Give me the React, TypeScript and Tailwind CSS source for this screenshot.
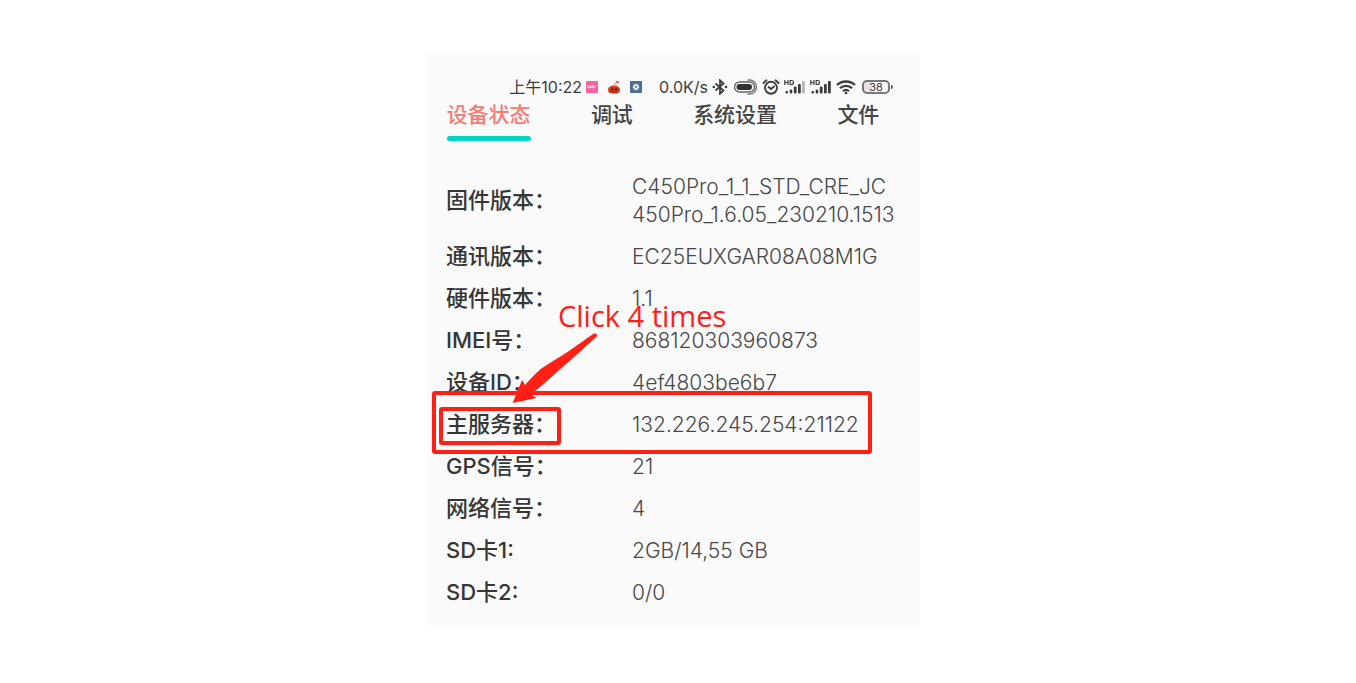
import type { ReactNode } from "react";

const tabs = ["设备状态", "调试", "系统设置", "文件"];

type Row = { label: string; value: ReactNode; marked?: boolean };

const rows: Row[] = [
  {
    label: "固件版本：",
    value: (
      <>
        C450Pro_1_1_STD_CRE_JC
        <br />
        450Pro_1.6.05_230210.1513
      </>
    ),
  },
  { label: "通讯版本：", value: "EC25EUXGAR08A08M1G" },
  { label: "硬件版本：", value: "1.1" },
  { label: "IMEI号：", value: "868120303960873" },
  { label: "设备ID：", value: "4ef4803be6b7" },
  { label: "主服务器：", value: "132.226.245.254:21122", marked: true },
  { label: "GPS信号：", value: "21" },
  { label: "网络信号：", value: "4" },
  { label: "SD卡1:", value: "2GB/14,55 GB" },
  { label: "SD卡2:", value: "0/0" },
];

function AppIcons() {
  return (
    <svg width="57" height="16" viewBox="0 0 57 16" aria-hidden="true">
      <rect x="0" y="2" width="12" height="12" rx="1" fill="#f9629f" />
      <path d="M1.500 6.500l.5 2.500 1.500-1 .8-1.500.7 2.500 1.500-1 .5-1.500.8 2.500 1.500-1 1-1.500" fill="none" stroke="#fff" strokeWidth="1" />
      <path d="M22 11c0-3 2.500-4.500 6-4.500s6 1.500 6 4.500-2.500 3.500-6 3.500-6-.5-6-3.500z" fill="#d43d1c" />
      <path d="M28 7c0-2 1-3 3-3" fill="none" stroke="#e8b0a0" strokeWidth="1.500" />
      <circle cx="31.500" cy="3" r="1.300" fill="#e2583a" />
      <path d="M25 11l1.500-2 1 2zM29 11l1-2 1.500 2zM25 12.800h6" fill="#5b1408" stroke="#5b1408" strokeWidth=".5" />
      <rect x="44" y="2" width="12" height="12" rx="1" fill="#4c6f92" />
      <circle cx="50" cy="8" r="1.900" fill="none" stroke="#fff" strokeWidth="1.600" />
      <path d="M50 4.600v1M50 10.400v1M46.600 8h1M52.400 8h1M47.600 5.600l.7.7M51.700 9.700l.7.7M52.400 5.600l-.7.7M48.300 9.700l-.7.7" stroke="#fff" strokeWidth="1" />
    </svg>
  );
}

function Signal({ last }: { last: string }) {
  return (
    <svg width="22" height="16" viewBox="0 0 22 16" fill="#3c3c3c" aria-hidden="true">
      <path d="M.8 1v5M4 1v5M.8 3.500H4M6.200 1.500v4h1.500c2.300 0 2.300-4 0-4z" fill="none" stroke="#3c3c3c" strokeWidth="1.200" />
      <rect x="1.500" y="12" width="2.500" height="2.500" rx="1" />
      <rect x="5.700" y="10.500" width="2.500" height="4" rx="1" />
      <rect x="9.800" y="7.500" width="2.800" height="7" rx="1" />
      <rect x="14" y="5" width="2.800" height="9.500" rx="1" />
      <rect x="18" y="2" width="2.800" height="12.500" rx="1" fill={last} />
    </svg>
  );
}

function StatusIcons() {
  return (
    <div className="flex items-center">
      <svg className="mr-1.5" width="16" height="16" viewBox="0 0 16 16" fill="none" stroke="#3c3c3c" strokeWidth="1.800" aria-hidden="true">
        <path d="M3.500 4.500l8 7L8 14.700V1.300l3.500 3.200-8 7" />
        <circle cx="1.800" cy="8" r="1.300" fill="#3c3c3c" stroke="none" />
        <circle cx="14" cy="8" r="1.300" fill="#3c3c3c" stroke="none" />
      </svg>
      <svg className="mr-1" width="24" height="16" viewBox="0 0 24 16" fill="none" aria-hidden="true">
        <path d="M13.500 1h2a7 7 0 010 14h-2" stroke="#777" strokeWidth="1.400" />
        <path d="M5 3h10.500a5 5 0 010 10H5.500a5 5 0 010-10z" stroke="#666" strokeWidth="1.400" />
        <rect x="2.500" y="5" width="15.500" height="6" rx="3" fill="#333" />
      </svg>
      <svg className="mr-1" width="18" height="16" viewBox="0 0 18 16" fill="none" stroke="#3c3c3c" strokeWidth="1.900" aria-hidden="true">
        <circle cx="9" cy="8.800" r="6" />
        <path d="M6.500 8l2.500 2 3-2.500M1.500 4l3-2.700M16.500 4l-3-2.700" strokeLinecap="round" />
      </svg>
      <Signal last="#b5b5b5" />
      <span className="w-1" />
      <Signal last="#3c3c3c" />
      <svg className="ml-1 mr-1.5" width="20" height="16" viewBox="0 0 20 16" fill="none" stroke="#3c3c3c" strokeWidth="2.300" aria-hidden="true">
        <path d="M1 6c5-4.700 13-4.700 18 0M4 9.200c3.400-3.200 8.600-3.200 12 0M7 12.200c1.700-1.500 4.300-1.500 6 0" />
        <circle cx="10" cy="14" r="1.300" fill="#3c3c3c" stroke="none" />
      </svg>
      <div className="flex items-center">
        <span className="flex h-[14px] w-7 items-center justify-center rounded-[5px] border-2 border-[#777] bg-linear-to-r from-[#e4e4e4] from-35% to-[#fafafa] to-35% text-[11px] leading-none">
          38
        </span>
        <span className="ml-px h-1 w-[2px] rounded-r bg-[#555]" />
      </div>
    </div>
  );
}

export default function App() {
  return (
    <main className="flex min-h-screen justify-center bg-white pt-[53px] pr-[9px] pb-[57px] font-[Inter,'Noto_Sans_CJK_SC',sans-serif]">
      <section className="relative w-full max-w-[493px] self-start bg-[#fafafa] pb-[19px]">
        <div className="flex h-[47px] items-end justify-end pr-[27px] pb-px text-[#3c3c3c]">
          <div className="flex h-6 items-center text-base">
            <span className="mr-1">上午10:22</span>
            <AppIcons />
            <span className="mr-1 ml-4">0.0K/s</span>
            <StatusIcons />
          </div>
        </div>

        <nav className="grid grid-cols-4 text-[21px] leading-[30px] font-medium text-[#444]">
          {tabs.map((tab, i) => (
            <button key={tab} type="button" className="flex flex-col items-center">
              <span className={i === 0 ? "text-[#f47c74]" : ""}>{tab}</span>
              {i === 0 && <span className="mt-1.5 h-[5px] w-[84px] rounded-full bg-[#05d5c3]" />}
            </button>
          ))}
        </nav>

        <dl className="mt-8 flex flex-col gap-3.5 pl-[19px] text-[22px] leading-7">
          {rows.map((row) => (
            <div key={row.label} className="relative flex items-center">
              <dt className="w-[186px] shrink-0 pb-0.5 leading-[26px] font-medium whitespace-nowrap text-[#363636]">{row.label}</dt>
              <dd className="text-[21px] font-light whitespace-nowrap text-[#484848]">{row.value}</dd>
              {row.marked && (
                <>
                  <span className="absolute -top-5 -left-[14px] h-[63px] w-[440px] rounded-[3px] border-4 border-[#ff2015]" />
                  <span className="absolute -top-1 -left-[7px] h-[38px] w-[122px] rounded-[3px] border-4 border-[#ff2015]" />
                </>
              )}
            </div>
          ))}
        </dl>

        <p className="absolute top-[243px] left-[131px] font-['Open_Sans','Noto_Sans',sans-serif] text-[29px] leading-10 whitespace-nowrap text-[#ff2015]">
          Click 4 times
        </p>
        <svg className="absolute top-[279px] left-[84px]" width="88" height="74" viewBox="511 332 88 74" fill="#ff2015" aria-hidden="true">
          <path d="M512.700 403L522 380L525 385C530 379 535 374 541 368.700C550 362.500 560 357 569.700 350.500L593.500 333.700Q597.500 332.700 597 336.200L574.700 356.500C566 364 557 372 548 380C543 385 537 389 531 394.500L536.500 397.900Z" />
        </svg>
      </section>
    </main>
  );
}
